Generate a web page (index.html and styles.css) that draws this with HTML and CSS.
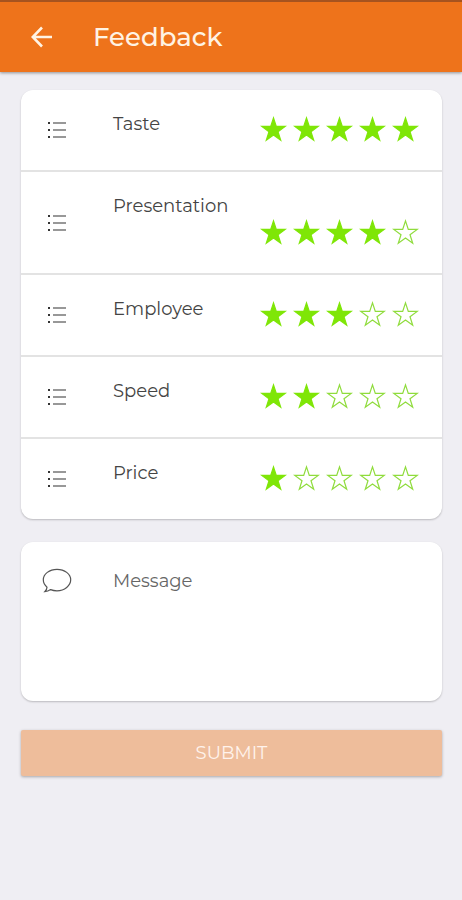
FILE: index.html
```html
<!DOCTYPE html>
<html lang="en">
<head>
    <meta charset="UTF-8">
    <meta name="viewport" content="width=device-width, initial-scale=1.0">
    <title>Feedback</title>
    <link rel="stylesheet" href="styles.css">
</head>
<body>
    <!-- Shared shapes -->
    <svg class="sprite" aria-hidden="true">
        <symbol id="icon-star" viewBox="0 0 27 27">
            <path d="M13.5 1.9 L16.3 10.4 H25.2 L18 15.7 L20.7 24.2 L13.5 18.9 L6.3 24.2 L9 15.7 L1.8 10.4 H10.7 Z"/>
        </symbol>
        <symbol id="icon-list" viewBox="0 0 20 18">
            <path d="M1 1h2v2H1zM1 8h2v2H1zM1 15h2v2H1z" fill="#333"/>
            <path d="M6 2h13M6 9h13M6 16h13" fill="none" stroke="#777" stroke-width="1.3"/>
        </symbol>
    </svg>

    <header class="toolbar">
        <a href="#" class="back-link" aria-label="Back">
            <svg width="22" height="22" viewBox="0 0 22 22"><path d="M21 11H2M11 1.5L1.7 11l9.3 9.5"/></svg>
        </a>
        <h1>Feedback</h1>
    </header>

    <main>
        <form class="feedback-form">
            <div class="card">
                <div class="row">
                    <svg class="list-icon"><use href="#icon-list"/></svg>
                    <div class="row-content" role="radiogroup" aria-labelledby="taste">
                        <span class="name" id="taste">Taste</span>
                        <div class="stars">
                            <label class="star"><input type="radio" name="taste" value="1" aria-label="1 star"><svg><use href="#icon-star"/></svg></label>
                            <label class="star"><input type="radio" name="taste" value="2" aria-label="2 stars"><svg><use href="#icon-star"/></svg></label>
                            <label class="star"><input type="radio" name="taste" value="3" aria-label="3 stars"><svg><use href="#icon-star"/></svg></label>
                            <label class="star"><input type="radio" name="taste" value="4" aria-label="4 stars"><svg><use href="#icon-star"/></svg></label>
                            <label class="star"><input type="radio" name="taste" value="5" aria-label="5 stars" checked><svg><use href="#icon-star"/></svg></label>
                        </div>
                    </div>
                </div>
                <div class="row">
                    <svg class="list-icon"><use href="#icon-list"/></svg>
                    <div class="row-content" role="radiogroup" aria-labelledby="presentation">
                        <span class="name" id="presentation">Presentation</span>
                        <div class="stars">
                            <label class="star"><input type="radio" name="presentation" value="1" aria-label="1 star"><svg><use href="#icon-star"/></svg></label>
                            <label class="star"><input type="radio" name="presentation" value="2" aria-label="2 stars"><svg><use href="#icon-star"/></svg></label>
                            <label class="star"><input type="radio" name="presentation" value="3" aria-label="3 stars"><svg><use href="#icon-star"/></svg></label>
                            <label class="star"><input type="radio" name="presentation" value="4" aria-label="4 stars" checked><svg><use href="#icon-star"/></svg></label>
                            <label class="star"><input type="radio" name="presentation" value="5" aria-label="5 stars"><svg><use href="#icon-star"/></svg></label>
                        </div>
                    </div>
                </div>
                <div class="row">
                    <svg class="list-icon"><use href="#icon-list"/></svg>
                    <div class="row-content" role="radiogroup" aria-labelledby="employee">
                        <span class="name" id="employee">Employee</span>
                        <div class="stars">
                            <label class="star"><input type="radio" name="employee" value="1" aria-label="1 star"><svg><use href="#icon-star"/></svg></label>
                            <label class="star"><input type="radio" name="employee" value="2" aria-label="2 stars"><svg><use href="#icon-star"/></svg></label>
                            <label class="star"><input type="radio" name="employee" value="3" aria-label="3 stars" checked><svg><use href="#icon-star"/></svg></label>
                            <label class="star"><input type="radio" name="employee" value="4" aria-label="4 stars"><svg><use href="#icon-star"/></svg></label>
                            <label class="star"><input type="radio" name="employee" value="5" aria-label="5 stars"><svg><use href="#icon-star"/></svg></label>
                        </div>
                    </div>
                </div>
                <div class="row">
                    <svg class="list-icon"><use href="#icon-list"/></svg>
                    <div class="row-content" role="radiogroup" aria-labelledby="speed">
                        <span class="name" id="speed">Speed</span>
                        <div class="stars">
                            <label class="star"><input type="radio" name="speed" value="1" aria-label="1 star"><svg><use href="#icon-star"/></svg></label>
                            <label class="star"><input type="radio" name="speed" value="2" aria-label="2 stars" checked><svg><use href="#icon-star"/></svg></label>
                            <label class="star"><input type="radio" name="speed" value="3" aria-label="3 stars"><svg><use href="#icon-star"/></svg></label>
                            <label class="star"><input type="radio" name="speed" value="4" aria-label="4 stars"><svg><use href="#icon-star"/></svg></label>
                            <label class="star"><input type="radio" name="speed" value="5" aria-label="5 stars"><svg><use href="#icon-star"/></svg></label>
                        </div>
                    </div>
                </div>
                <div class="row">
                    <svg class="list-icon"><use href="#icon-list"/></svg>
                    <div class="row-content" role="radiogroup" aria-labelledby="price">
                        <span class="name" id="price">Price</span>
                        <div class="stars">
                            <label class="star"><input type="radio" name="price" value="1" aria-label="1 star" checked><svg><use href="#icon-star"/></svg></label>
                            <label class="star"><input type="radio" name="price" value="2" aria-label="2 stars"><svg><use href="#icon-star"/></svg></label>
                            <label class="star"><input type="radio" name="price" value="3" aria-label="3 stars"><svg><use href="#icon-star"/></svg></label>
                            <label class="star"><input type="radio" name="price" value="4" aria-label="4 stars"><svg><use href="#icon-star"/></svg></label>
                            <label class="star"><input type="radio" name="price" value="5" aria-label="5 stars"><svg><use href="#icon-star"/></svg></label>
                        </div>
                    </div>
                </div>
            </div>

            <div class="card message-card">
                <svg class="chat-icon" viewBox="0 0 30 26">
                    <path d="M5 19.2C2.6 17.1 1.3 14.5 1.3 11.8C1.3 6 7.4 1.3 15 1.3S28.7 6 28.7 11.8S22.6 22.8 15 22.8C12.7 22.8 10.5 22.4 8.6 21.6C7 22.8 5 23.6 2.8 23.6C4.2 22.3 5 20.8 5 19.2Z"/>
                </svg>
                <div class="message-field">
                    <label for="message">Message</label>
                    <textarea id="message" name="message"></textarea>
                </div>
            </div>

            <button type="submit" class="submit-btn" disabled>SUBMIT</button>
        </form>
    </main>
</body>
</html>
```
FILE: styles.css
```css
* {
    box-sizing: border-box;
}

body {
    margin: 0;
    min-height: 100vh;
    background-color: #efeef3;
    color: #444;
    font-family: Montserrat, Inter, sans-serif;
    font-size: 18px;
}

.sprite {
    display: none;
}

/* Top bar */
.toolbar {
    display: flex;
    align-items: center;
    gap: 40px;
    height: 72px;
    padding: 0 31px;
    background-color: #ee731b;
    border-top: 2px solid #a6531f;
    box-shadow: 0 1px 3px rgba(0, 0, 0, 0.4);
}

.toolbar h1 {
    margin: 0;
    color: #fff3e4;
    font-size: 26px;
    font-weight: 500;
}

.back-link {
    display: flex;
}

.back-link svg {
    fill: none;
    stroke: #fff3e4;
    stroke-width: 2.6;
}

/* Cards */
.feedback-form {
    display: flex;
    flex-direction: column;
    padding: 18px 20px 24px 21px;
}

.card {
    margin-bottom: 23px;
    background-color: #fff;
    border-radius: 12px;
    box-shadow: 0 1px 2px rgba(0, 0, 0, 0.22);
}

.row {
    display: flex;
    align-items: center;
    padding: 24px 23px 27px 26px;
    border-bottom: 2px solid #e3e3e3;
}

.row:last-child {
    border-bottom: none;
}

.list-icon {
    flex: none;
    width: 20px;
    height: 18px;
    margin: 3px 46px 0 0;
}

.row-content {
    display: flex;
    flex: 1;
    flex-wrap: wrap;
}

.name {
    line-height: 21px;
}

/* Stars */
.stars {
    display: flex;
    gap: 6px;
    margin-left: auto;
    padding: 2px 0 0 40px;
}

.star {
    display: flex;
    position: relative;
    cursor: pointer;
}

.star input {
    position: absolute;
    inset: 0;
    margin: 0;
    opacity: 0;
}

.star svg {
    width: 27px;
    height: 27px;
    fill: none;
    stroke: #8fdc3c;
    stroke-width: 1.2;
}

/* fill every star up to the selected one */
.star:has(input:checked) svg,
.star:has(~ .star input:checked) svg {
    fill: #7fe607;
    stroke: #7fe607;
}

/* Message */
.message-card {
    display: flex;
    align-items: flex-start;
    min-height: 159px;
    margin-bottom: 29px;
    padding: 26px 23px 20px 21px;
}

.chat-icon {
    flex: none;
    width: 30px;
    height: 26px;
    margin-right: 41px;
    fill: none;
    stroke: #555;
    stroke-width: 1.2;
}

.message-field {
    display: flex;
    flex: 1;
    flex-direction: column;
}

.message-field label {
    color: #666;
    line-height: 26px;
}

.message-field textarea {
    height: 80px;
    padding: 0;
    border: none;
    outline: none;
    background: none;
    font: inherit;
    resize: none;
}

.submit-btn {
    height: 46px;
    border: none;
    border-radius: 2px;
    background-color: #eebd9b;
    box-shadow: 0 1px 3px rgba(0, 0, 0, 0.3);
    color: #fff3ec;
    font: inherit;
}
```
